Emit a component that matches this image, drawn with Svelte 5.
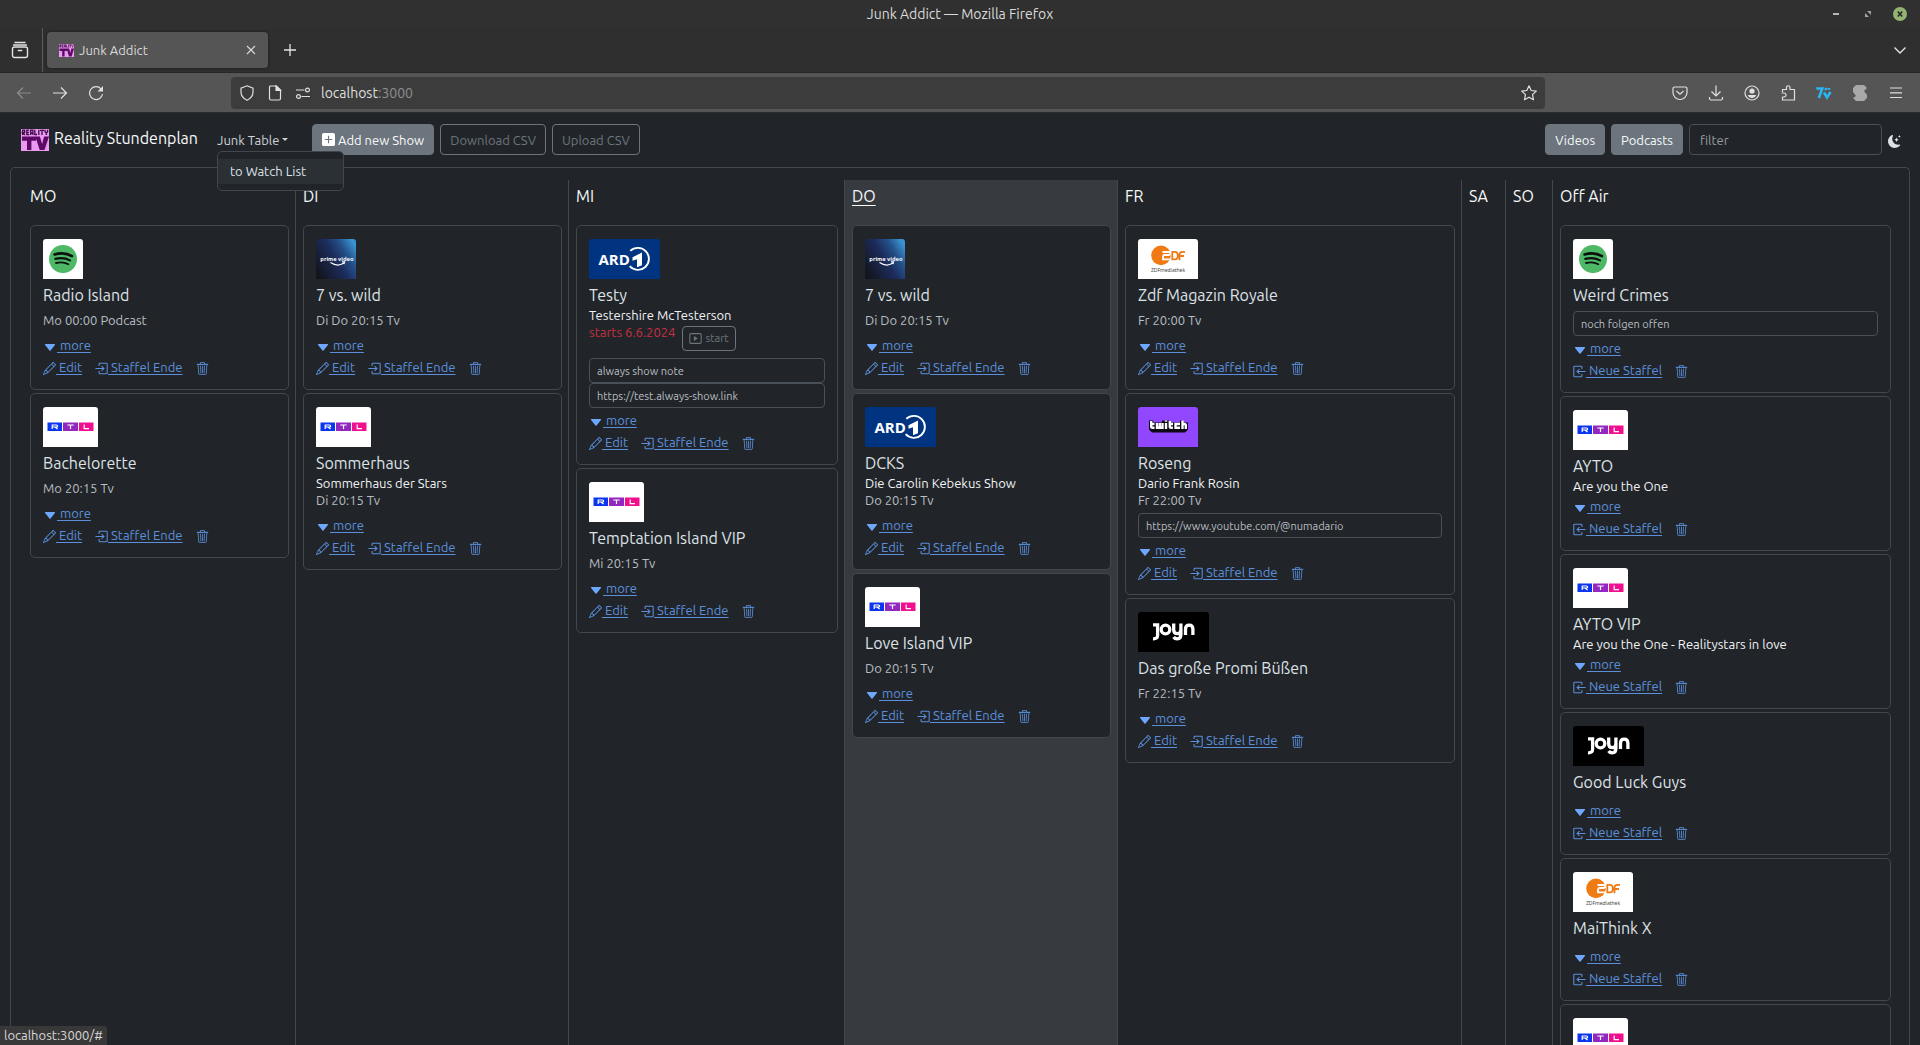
<script lang="ts">
  type Logo = 'spotify' | 'rtl' | 'prime' | 'ard' | 'zdf' | 'twitch' | 'joyn';
  type Show = {
    logo: Logo;
    title?: string;
    sub?: string;
    time?: string;
    starts?: string;
    notes?: string[];
  };
  type Day = { name: string; today?: boolean; off?: boolean; shows: Show[] };

  const days: Day[] = [
    {
      name: 'MO',
      shows: [
        { logo: 'spotify', title: 'Radio Island', time: 'Mo 00:00 Podcast' },
        { logo: 'rtl', title: 'Bachelorette', time: 'Mo 20:15 Tv' },
      ],
    },
    {
      name: 'DI',
      shows: [
        { logo: 'prime', title: '7 vs. wild', time: 'Di Do 20:15 Tv' },
        { logo: 'rtl', title: 'Sommerhaus', sub: 'Sommerhaus der Stars', time: 'Di 20:15 Tv' },
      ],
    },
    {
      name: 'MI',
      shows: [
        {
          logo: 'ard',
          title: 'Testy',
          sub: 'Testershire McTesterson',
          starts: 'starts 6.6.2024',
          notes: ['always show note', 'https://test.always-show.link'],
        },
        { logo: 'rtl', title: 'Temptation Island VIP', time: 'Mi 20:15 Tv' },
      ],
    },
    {
      name: 'DO',
      today: true,
      shows: [
        { logo: 'prime', title: '7 vs. wild', time: 'Di Do 20:15 Tv' },
        { logo: 'ard', title: 'DCKS', sub: 'Die Carolin Kebekus Show', time: 'Do 20:15 Tv' },
        { logo: 'rtl', title: 'Love Island VIP', time: 'Do 20:15 Tv' },
      ],
    },
    {
      name: 'FR',
      shows: [
        { logo: 'zdf', title: 'Zdf Magazin Royale', time: 'Fr 20:00 Tv' },
        {
          logo: 'twitch',
          title: 'Roseng',
          sub: 'Dario Frank Rosin',
          time: 'Fr 22:00 Tv',
          notes: ['https://www.youtube.com/@numadario'],
        },
        { logo: 'joyn', title: 'Das große Promi Büßen', time: 'Fr 22:15 Tv' },
      ],
    },
    { name: 'SA', shows: [] },
    { name: 'SO', shows: [] },
    {
      name: 'Off Air',
      off: true,
      shows: [
        { logo: 'spotify', title: 'Weird Crimes', notes: ['noch folgen offen'] },
        { logo: 'rtl', title: 'AYTO', sub: 'Are you the One' },
        { logo: 'rtl', title: 'AYTO VIP', sub: 'Are you the One - Realitystars in love' },
        { logo: 'joyn', title: 'Good Luck Guys' },
        { logo: 'zdf', title: 'MaiThink X' },
        { logo: 'rtl' },
      ],
    },
  ];
</script>

{#snippet realityLogo(cls: string)}
  <svg class={cls} viewBox="0 0 28 22" preserveAspectRatio="none" aria-hidden="true">
    <rect width="28" height="22" fill="#ea9af0" />
    <g fill="none" stroke="#3f0a45" stroke-width="1.3">
      <path d="M1.600 6V1.200h2v2.400h-2l2.200 2.400M8.200 1.200H5.800v4.300h2.400M5.800 3.300h2M9.700 6V1.200h2.200V6M9.700 4h2M13.800 .8v4.700h2.200M17.800 .8V6M19 1.300h4M21 1.300V6M24 .8v2l1.300 1.200 1.300-1.200v-2M25.300 4v2" />
    </g>
    <path d="M1 7.500h14v4.200h-4.600V21H6v-9.300H1zM14.300 7.500h4.600l2.200 7.600 2-7.600H28l-4.500 13.500h-4.800z" fill="#5c0a66" />
  </svg>
{/snippet}

{#snippet channelLogo(kind: Logo)}
  {#if kind === 'spotify'}
    <svg class="logo" width="40" height="40" viewBox="0 0 40 40" role="img" aria-label="Spotify">
      <rect width="40" height="40" fill="#fff" />
      <circle cx="20" cy="20" r="14" fill="#4db866" />
      <g fill="none" stroke="#0c0f0d" stroke-linecap="round">
        <path d="M11.500 15.500c6-1.700 12.600-1.200 17.500 1.700" stroke-width="2.600" />
        <path d="M12.300 19.900c5-1.400 10.400-.9 14.700 1.500" stroke-width="2.200" />
        <path d="M13 24c4.300-1 8.800-.7 12.300 1.300" stroke-width="1.800" />
      </g>
    </svg>
  {:else if kind === 'rtl'}
    <svg class="logo" width="55" height="40" viewBox="0 0 55 40" role="img" aria-label="RTL">
      <rect width="55" height="40" fill="#fff" />
      <rect x="4.500" y="15.500" width="14.500" height="8.500" fill="#0b35ee" />
      <rect x="20" y="15.500" width="15" height="8.500" fill="#9328c0" />
      <rect x="36" y="15.500" width="14.500" height="8.500" fill="#f0108f" />
      <g fill="none" stroke="#fff" stroke-width="1.200">
        <path d="M9.200 22v-4h4.400q1 0 1 1t-1 1H9.200M12 20l2.600 2" />
        <path d="M24.300 18h6.400M27.500 18v4" />
        <path d="M41.200 17.400v4.200h4.800" />
      </g>
    </svg>
  {:else if kind === 'prime'}
    <svg class="logo" width="40" height="40" viewBox="0 0 40 40" role="img" aria-label="prime video">
      <defs>
        <linearGradient id="prime-bg" x1="0" y1="0.8" x2="1" y2="0.2">
          <stop offset="0" stop-color="#13151d" />
          <stop offset="0.5" stop-color="#1c2c5c" />
          <stop offset="0.75" stop-color="#245089" />
          <stop offset="1" stop-color="#3a93d0" />
        </linearGradient>
      </defs>
      <rect width="40" height="40" fill="url(#prime-bg)" />
      <text x="21" y="21.500" text-anchor="middle" class="prime-word">prime video</text>
      <path d="M14.500 23.500q7 4.600 13 .8M26 22.800h2.600l-.7 2.400" fill="none" stroke="#fff" stroke-width="1.200" />
    </svg>
  {:else if kind === 'ard'}
    <svg class="logo" width="71" height="40" viewBox="0 0 71 40" role="img" aria-label="ARD 1">
      <rect width="71" height="40" fill="#003480" />
      <text x="9.500" y="25.800" class="ard-word">ARD</text>
      <path d="M41.300 11.900a11 11 0 1 1-.6 15.300" fill="none" stroke="#fff" stroke-width="1.900" />
      <path d="M43.500 18.300 53 13.500v12.700l-5 2v-8l-4.500 1.500z" fill="#fff" />
    </svg>
  {:else if kind === 'zdf'}
    <svg class="logo" width="60" height="40" viewBox="0 0 60 40" role="img" aria-label="ZDFmediathek">
      <rect width="60" height="40" fill="#fff" />
      <circle cx="23" cy="16.400" r="9.800" fill="#f07a13" />
      <path d="M24.500 13h6.500q1.300 0 1.300 1.500t-1.300 1.500h-4.500q-1.500 0-1.500 1.600v2.800h9" fill="none" stroke="#fff" stroke-width="1.800" />
      <path d="M34.300 12.800v7.600h2.800q2.700 0 2.700-3.800t-2.700-3.800h-3.500M41.500 21.200v-5.500q0-2.900 3-2.900H47M41.500 17H46" fill="none" stroke="#f07a13" stroke-width="1.800" />
      <text x="30" y="33" text-anchor="middle" class="zdf-word">ZDFmediathek</text>
    </svg>
  {:else if kind === 'twitch'}
    <svg class="logo" width="60" height="40" viewBox="0 0 60 40" role="img" aria-label="twitch">
      <rect width="60" height="40" fill="#9147ff" />
      <path d="M11 13.500h4l1 2h8v-2h7l2 2h9v-2h3l1 2h4v7l-3 3H14l-3-3z" fill="#0d0716" />
      <g fill="none" stroke="#fff" stroke-width="2.400">
        <path d="M13.200 14v5.500q0 1.300 1.300 1.300h2M12 17h4.500" />
        <path d="M19 16v4.800h5.500V16M21.800 16v4.800" />
        <path d="M28 16v6M28 13.500v1.300M31.800 14v5.500q0 1.300 1.300 1.300h1.800M31 17h4" />
        <path d="M42 17h-4.500v3.800H42M44.500 13.500V22M44.500 17h2q1.300 0 1.300 1.300V22" />
      </g>
    </svg>
  {:else}
    <svg class="logo" width="71" height="40" viewBox="0 0 71 40" role="img" aria-label="joyn">
      <rect width="71" height="40" fill="#000" />
      <g fill="none" stroke="#fff" stroke-width="3.300">
        <path d="M15 12.800h4.600v10.500q0 3.700-4.600 3.500" />
        <circle cx="27.500" cy="17.500" r="4.300" />
        <path d="M35.700 11.500v6.200q0 4 3.600 4t3.600-4v-6.200M42.900 17v5.500q0 4.300-3.600 4.300-2.500 0-3.700-1.800" />
        <path d="M47.500 23v-5.700q0-4.100 3.700-4.100t3.700 4.100V23" />
      </g>
    </svg>
  {/if}
{/snippet}

{#snippet trash()}
  <a class="trash" href="#delete" aria-label="Löschen">
    <svg class="ico" viewBox="0 0 16 16" aria-hidden="true">
      <path fill="currentColor" d="M6.500 1h3a.5.5 0 0 1 .5.5v1H6v-1a.5.5 0 0 1 .5-.5M11 2.500v-1A1.500 1.500 0 0 0 9.500 0h-3A1.500 1.500 0 0 0 5 1.500v1H1.500a.5.5 0 0 0 0 1h.538l.853 10.660A2 2 0 0 0 4.885 16h6.230a2 2 0 0 0 1.994-1.840l.853-10.660h.538a.5.5 0 0 0 0-1zm1.958 1-.846 10.580a1 1 0 0 1-.997.920h-6.230a1 1 0 0 1-.997-.920L3.042 3.500z" />
      <path stroke="currentColor" stroke-linecap="round" fill="none" d="M5.500 5l.5 8.500M8 5v8.500M10.500 5l-.5 8.500M1.500 2.800h13" />
    </svg>
  </a>
{/snippet}

<div class="window">
  <header class="titlebar">
    <span class="window-title">Junk Addict — Mozilla Firefox</span>
    <div class="window-controls">
      <button aria-label="Minimieren"><svg width="14" height="14" viewBox="0 0 14 14"><path d="M4 7h6" stroke="#b5b5b5" stroke-width="2" /></svg></button>
      <button aria-label="Maximieren"><svg width="14" height="14" viewBox="0 0 14 14"><path d="M6 4h4v4zM4 6v4h4z" fill="#a5a5a5" /></svg></button>
      <button aria-label="Schließen"><svg width="14" height="14" viewBox="0 0 14 14"><circle cx="7" cy="7" r="7" fill="#92b372" /><path d="M4.800 4.500l4.400 5M9.200 4.500l-4.400 5" stroke="#2b2b2b" stroke-width="1.700" /></svg></button>
    </div>
  </header>

  <div class="tabbar">
    <button class="chrome-btn" aria-label="Tabs anzeigen">
      <svg width="18" height="18" viewBox="0 0 18 18" fill="none" stroke="#e4e4e4" stroke-width="1.400" stroke-linecap="round"><path d="M4 1.500h10M2.500 4h13" /><rect x="1.500" y="6" width="15" height="10.500" rx="2" /><path d="M7.300 9.500h3.400" /></svg>
    </button>
    <span class="tab-divider"></span>
    <div class="tab">
      {@render realityLogo('favicon')}
      <span class="tab-label">Junk Addict</span>
      <button aria-label="Tab schließen"><svg width="10" height="10" viewBox="0 0 10 10"><path d="M1 1l8 8M9 1L1 9" stroke="#dadada" stroke-width="1.100" /></svg></button>
    </div>
    <button class="chrome-btn" aria-label="Neuer Tab"><svg width="14" height="14" viewBox="0 0 14 14"><path d="M7 1v12M1 7h12" stroke="#e4e4e4" stroke-width="1.300" /></svg></button>
    <button class="chrome-btn tabs-menu" aria-label="Alle Tabs"><svg width="14" height="14" viewBox="0 0 14 14"><path d="M1.500 4.500L7 10l5.500-5.500" fill="none" stroke="#e4e4e4" stroke-width="1.400" /></svg></button>
  </div>

  <div class="toolbar">
    <div class="tool-group">
      <button class="dim" aria-label="Zurück"><svg viewBox="0 0 16 16"><path d="M15 8H1.500M7 2.500L1.500 8 7 13.500" /></svg></button>
      <button aria-label="Vor"><svg viewBox="0 0 16 16"><path d="M1 8h13.500M9 2.500L14.500 8 9 13.500" /></svg></button>
      <button aria-label="Neu laden"><svg viewBox="0 0 16 16"><path d="M13 3.800A6.500 6.500 0 1 0 14.500 9" /><path d="M15 1v5.500H9.500z" fill="#e0e0e0" stroke="none" /></svg></button>
    </div>
    <div class="urlbar">
      <svg viewBox="0 0 16 16"><path d="M8 .8l6 2.300v4c0 4-2.500 6.600-6 8.200-3.500-1.600-6-4.200-6-8.200v-4z" /></svg>
      <svg viewBox="0 0 16 16"><path d="M3.500 1h6L13.500 5v8.500a1.500 1.500 0 0 1-1.500 1.500H4a1.500 1.500 0 0 1-1.500-1.500V2a1 1 0 0 1 1-1z" /><path d="M9 1v4.500h4.500z" fill="#e0e0e0" /></svg>
      <svg viewBox="0 0 16 16"><path d="M1 5h8.500M6.500 11.500H15" /><circle cx="12.500" cy="5" r="1.900" /><circle cx="3.500" cy="11.500" r="1.900" /></svg>
      <span class="url">localhost<span class="port">:3000</span></span>
      <svg class="star" viewBox="0 0 16 16"><path d="M8 .8l2.200 4.700 5.100.6-3.800 3.500 1 5.100L8 12.200l-4.500 2.500 1-5.100L.7 6.100l5.100-.6z" stroke-linejoin="round" /></svg>
    </div>
    <div class="tool-group">
      <button aria-label="Pocket"><svg viewBox="0 0 16 16"><path d="M2.500 2h11a1.500 1.500 0 0 1 1.500 1.500V7.500a7 7 0 0 1-14 0V3.500A1.500 1.500 0 0 1 2.500 2z" /><path d="M4.500 6L8 9.300 11.500 6" /></svg></button>
      <button aria-label="Downloads"><svg viewBox="0 0 16 16"><path d="M8 .5v10M3.500 6.500L8 11l4.500-4.500M1.500 12v1.500A1.500 1.500 0 0 0 3 15h10a1.500 1.500 0 0 0 1.500-1.500V12" /></svg></button>
      <button aria-label="Konto"><svg viewBox="0 0 16 16"><circle cx="8" cy="8" r="7" /><circle cx="8" cy="6" r="2.600" fill="#e0e0e0" stroke="none" /><path d="M3.800 10h8.400q-1 3-4.200 3t-4.200-3z" fill="#e0e0e0" stroke="none" /></svg></button>
      <button aria-label="Erweiterungen"><svg viewBox="0 0 16 16"><path d="M2.500 7V4.500h4V2.500a1.700 1.700 0 0 1 3.500 0v2h4.500V15h-12v-3H4a2 2 0 0 0 0-4H1.500" stroke-linejoin="round" /></svg></button>
      <button aria-label="7TV"><svg viewBox="0 0 16 16"><path d="M.3 3.500h6L2.800 13M8 7.500l3 5 3.500-5.500M9.300 3l1.200 2M13 3v1.800" class="seven" /></svg></button>
      <button aria-label="Stylus"><svg viewBox="0 0 16 16"><path d="M4 0h8l3 3-3 3 3 4v3l-3 3H4l-3-3 3-2-3-4V3z" fill="#a8a8a8" stroke="none" /></svg></button>
      <button aria-label="Menü"><svg viewBox="0 0 16 16"><path d="M2 3h12M2 7.800h12M2 12.500h12" /></svg></button>
    </div>
  </div>

  <div class="page">
    <nav class="navbar">
      <a class="brand" href="#home">
        {@render realityLogo('brand-logo')}
        <span>Reality Stundenplan</span>
      </a>
      <div class="dropdown">
        <button class="dropdown-toggle">Junk Table<span class="caret"></span></button>
        <div class="dropdown-menu"><a href="#watchlist">to Watch List</a></div>
      </div>
      <div class="actions">
        <button class="btn solid">
          <svg class="plus" viewBox="0 0 14 14" aria-hidden="true"><rect width="14" height="14" rx="2" fill="#fff" /><path d="M7 3v8M3 7h8" stroke="#6c757d" stroke-width="1.200" /></svg>Add new Show
        </button>
        <button class="btn outline">Download CSV</button>
        <button class="btn outline">Upload CSV</button>
      </div>
      <div class="filters">
        <button class="btn solid">Videos</button>
        <button class="btn solid">Podcasts</button>
        <input type="text" placeholder="filter" aria-label="filter" />
        <button class="theme" aria-label="Dark Mode">
          <svg viewBox="0 0 16 16" fill="#dee2e6"><path d="M6 .3a.77.77 0 0 1 .08.860 7.200 7.200 0 0 0-.880 3.460c0 4.020 3.280 7.280 7.320 7.280q.790-.001 1.530-.160a.79.79 0 0 1 .810.316.73.73 0 0 1-.031.893A8.350 8.350 0 0 1 8.340 16C3.730 16 0 12.290 0 7.710 0 4.270 2.110 1.310 5.120.060A.75.75 0 0 1 6 .280" /><path d="M10.500 3.200q.4 2.300 2.600 2.700-2.200.4-2.600 2.700-.4-2.300-2.600-2.700 2.200-.4 2.600-2.700zM14 0q.2 1.500 1.700 1.700Q14.200 1.900 14 3.400q-.2-1.500-1.700-1.700Q13.800 1.500 14 0z" /></svg>
        </button>
      </div>
    </nav>

    <main class="board">
      {#each days as day}
        <section class="day" class:today={day.today}>
          <h2>{day.name}</h2>
          {#each day.shows as show}
            <article class="card">
              {@render channelLogo(show.logo)}
              {#if show.title}
                <h3>{show.title}</h3>
                {#if show.sub}<p class="sub">{show.sub}</p>{/if}
                {#if show.time}<p class="time">{show.time}</p>{/if}
                {#if show.starts}
                  <div class="starts">
                    <span>{show.starts}</span>
                    <button>
                      <svg viewBox="0 0 16 16" aria-hidden="true"><rect x="1" y="2" width="14" height="12" rx="1.500" fill="none" stroke="currentColor" stroke-width="1.300" /><path d="M6 5v6l5-3z" fill="currentColor" /></svg>start
                    </button>
                  </div>
                {/if}
                {#if show.notes}
                  <div class="notes">
                    {#each show.notes as note}<input type="text" value={note} aria-label="Notiz" readonly />{/each}
                  </div>
                {/if}
                <div class="more">
                  <a href="#more"><svg viewBox="0 0 16 16" aria-hidden="true"><path d="M7.250 12.500a1 1 0 0 0 1.500 0l5.500-7A.8.8 0 0 0 13.600 4H2.400a.8.8 0 0 0-.65 1.500z" fill="#6ea8fe" /></svg><span>&nbsp;more</span></a>
                </div>
                <div class="links">
                  {#if day.off}
                    <a href="#new"><svg class="ico" viewBox="0 0 16 16" aria-hidden="true"><path d="M11 5V2.500a1 1 0 0 0-1-1H2a1 1 0 0 0-1 1v11a1 1 0 0 0 1 1h8a1 1 0 0 0 1-1V11M15.500 8H5M8 5L5 8l3 3" fill="none" stroke="currentColor" stroke-width="1.300" /></svg><span>&nbsp;Neue Staffel</span></a>
                  {:else}
                    <a href="#edit"><svg class="ico" viewBox="0 0 16 16" aria-hidden="true"><path fill="currentColor" d="M12.146.146a.5.5 0 0 1 .708 0l3 3a.5.5 0 0 1 0 .708l-10 10a.5.5 0 0 1-.168.110l-5 2a.5.5 0 0 1-.650-.650l2-5a.5.5 0 0 1 .110-.168zM11.207 2.500 13.500 4.793 14.793 3.500 12.500 1.207zm1.586 3L10.500 3.207 4 9.707V10h.5a.5.5 0 0 1 .5.5v.5h.5a.5.5 0 0 1 .5.5v.5h.293zm-9.761 5.175-.106.106-1.528 3.821 3.821-1.528.106-.106A.5.5 0 0 1 5 12.500V12h-.5a.5.5 0 0 1-.5-.5V11h-.5a.5.5 0 0 1-.468-.325" /></svg><span>&nbsp;Edit</span></a>
                    <a href="#end"><svg class="ico" viewBox="0 0 16 16" aria-hidden="true"><path d="M5 5V2.500a1 1 0 0 1 1-1h8a1 1 0 0 1 1 1v11a1 1 0 0 1-1 1H6a1 1 0 0 1-1-1V11M.5 8H11M8 5l3 3-3 3" fill="none" stroke="currentColor" stroke-width="1.300" /></svg><span>&nbsp;Staffel Ende</span></a>
                  {/if}
                  {@render trash()}
                </div>
              {/if}
            </article>
          {/each}
        </section>
      {/each}
    </main>
  </div>

  <div class="status">localhost:3000/#</div>
</div>

<style>
  :global(body) {
    margin: 0;
    background: #212529;
  }
  .window {
    position: relative;
    display: flex;
    flex-direction: column;
    height: 100vh;
    overflow: hidden;
    font-family: Ubuntu, 'Noto Sans', 'Open Sans', sans-serif;
    font-size: 13px;
    color: #dee2e6;
  }
  button {
    margin: 0;
    padding: 0;
    border: 0;
    background: none;
    font: inherit;
    color: inherit;
  }
  svg {
    display: block;
    flex: none;
  }
  h2,
  h3,
  p {
    margin: 0;
  }

  /* browser chrome */
  .titlebar {
    display: grid;
    grid-template-columns: 1fr auto 1fr;
    align-items: center;
    height: 28px;
    padding: 0 13px;
    background: #303030;
  }
  .window-title {
    grid-column: 2;
    color: #dadada;
    font-size: 14px;
    line-height: 20px;
  }
  .window-controls {
    display: flex;
    justify-content: flex-end;
    gap: 18px;
  }
  .tabbar {
    display: flex;
    align-items: center;
    height: 44px;
    padding: 0 13px 0 11px;
    background: #2f2f2f;
    border-bottom: 1px solid #272727;
  }
  .tab-divider {
    align-self: stretch;
    width: 1px;
    margin: 0 4px 0 13px;
    background: #5a5a5a;
  }
  .tab {
    display: flex;
    align-items: center;
    gap: 5px;
    box-sizing: border-box;
    width: 221px;
    height: 36px;
    margin-right: 15px;
    padding: 0 12px;
    border-radius: 4px;
    background: #555;
    box-shadow: 0 0 3px #1a1a1a;
  }
  .tab-label {
    flex: 1;
    color: #d8d8d8;
  }
  .tab :global(.favicon) {
    width: 15px;
    height: 13px;
  }
  .tabs-menu {
    margin-left: auto;
  }
  .toolbar {
    display: flex;
    align-items: center;
    height: 40px;
    padding: 0 16px;
    background: #555;
    border-bottom: 1px solid #2b2b2b;
    box-sizing: border-box;
  }
  .tool-group {
    display: flex;
    gap: 20px;
  }
  .tool-group svg,
  .urlbar svg {
    width: 16px;
    height: 16px;
    fill: none;
    stroke: #e0e0e0;
    stroke-width: 1.2;
  }
  .tool-group .seven {
    stroke: #29b6f6;
    stroke-width: 2.6;
  }
  .dim {
    opacity: 0.4;
  }
  .urlbar {
    display: flex;
    flex: 1;
    align-items: center;
    gap: 12px;
    height: 32px;
    margin: 0 127px;
    padding: 0 8px;
    border-radius: 4px;
    background: #3c3c3c;
  }
  .url {
    flex: 1;
    margin-left: -2px;
    color: #dfdfdf;
    font-size: 14px;
  }
  .port {
    color: #8f8f8f;
  }

  /* page */
  .page {
    display: flex;
    flex: 1;
    flex-direction: column;
    min-height: 0;
    padding: 0 10px;
    background: #212529;
  }
  .navbar {
    display: flex;
    align-items: center;
    height: 31px;
    padding: 11px 9px 12px 11px;
  }
  .brand {
    display: flex;
    align-items: center;
    gap: 5px;
    width: 196px;
    color: #f8f9fa;
    font-size: 16px;
    line-height: 20px;
    text-decoration: none;
    white-space: nowrap;
  }
  .brand span {
    padding-bottom: 4px;
  }
  .brand :global(.brand-logo) {
    width: 28px;
    height: 22px;
  }
  .dropdown {
    position: relative;
    width: 95px;
  }
  .dropdown-toggle {
    display: flex;
    align-items: center;
    gap: 3px;
    height: 20px;
    color: #ced2d6;
  }
  .caret {
    border: 3px solid transparent;
    border-top-color: currentColor;
    border-bottom: 0;
  }
  .dropdown-menu {
    position: absolute;
    top: 21px;
    left: 0;
    z-index: 2;
    box-sizing: border-box;
    width: 127px;
    padding: 7px 0 6px;
    border: 1px solid #42474c;
    border-radius: 5px;
    background: #212529;
  }
  .dropdown-menu a {
    display: block;
    padding: 0 12px;
    background: #2b3035;
    color: #dee2e6;
    line-height: 25px;
    text-decoration: none;
  }
  .actions,
  .filters {
    display: flex;
    align-items: center;
    gap: 6px;
  }
  .filters {
    margin-left: auto;
  }
  .btn {
    display: flex;
    align-items: center;
    gap: 3px;
    box-sizing: border-box;
    height: 31px;
    padding: 0 9px;
    border: 1px solid #6c757d;
    border-radius: 4px;
    white-space: nowrap;
  }
  .solid {
    background: #6c757d;
    color: #f8f9fa;
  }
  .outline {
    color: #6c757d;
  }
  .plus {
    width: 13px;
    height: 13px;
  }
  .filters input {
    box-sizing: border-box;
    width: 193px;
    height: 31px;
    padding: 0 10px;
    border: 1px solid #495057;
    border-radius: 4px;
    background: #212529;
    color: #dee2e6;
    font: inherit;
  }
  .filters input::placeholder {
    color: #959a9e;
  }
  .theme svg {
    width: 13px;
    height: 13px;
    margin-top: 4px;
  }

  .board {
    display: grid;
    grid-template-columns: 272fr 273fr 276fr 273fr 344fr 44fr 47fr 345fr;
    flex: 1;
    min-height: 0;
    padding: 12px 12px 0;
    border: 1px solid #43484d;
    border-bottom: 0;
    border-radius: 5px 5px 0 0;
  }
  .day {
    min-width: 0;
    padding: 0 6px 0 7px;
    border-left: 1px solid #43484d;
  }
  .day:first-child {
    border-left: 0;
  }
  .today {
    background: #373b3f;
  }
  h2 {
    height: 45px;
    color: #f8f9fa;
    font-size: 16px;
    font-weight: 400;
    line-height: 32px;
    white-space: nowrap;
  }
  .today h2 {
    text-decoration: underline;
    text-underline-offset: 3px;
  }
  .card {
    display: flex;
    flex-direction: column;
    margin-bottom: 3px;
    padding: 13px 12px;
    border: 1px solid #43484d;
    border-radius: 5px;
    background: #212529;
    line-height: 17px;
  }
  .logo {
    border-radius: 3px 3px 0 0;
  }
  .prime-word {
    fill: #fff;
    font: 600 6px Ubuntu, 'Noto Sans', sans-serif;
  }
  .ard-word {
    fill: #fff;
    font: 700 15px 'Open Sans', sans-serif;
  }
  .zdf-word {
    fill: #444;
    font: 400 5px 'Noto Sans', sans-serif;
  }
  h3 {
    margin-top: 4px;
    font-size: 16px;
    font-weight: 400;
    line-height: 24px;
  }
  .sub {
    color: #f1f3f5;
  }
  .time {
    color: #b9bdc1;
  }
  h3 + .time {
    margin-top: 5px;
  }
  .starts {
    display: flex;
    gap: 7px;
    height: 30px;
    color: #c62f41;
  }
  .starts button {
    display: flex;
    align-items: center;
    gap: 3px;
    box-sizing: border-box;
    height: 25px;
    margin-top: 2px;
    padding: 0 6px;
    border: 1px solid #6c757d;
    border-radius: 4px;
    color: #6c757d;
    font-size: 11px;
  }
  .starts svg {
    width: 13px;
    height: 13px;
  }
  .notes {
    display: flex;
    flex-direction: column;
    margin-top: 4px;
  }
  .notes input {
    box-sizing: border-box;
    width: 100%;
    height: 25px;
    padding: 0 7px;
    border: 1px solid #495057;
    border-radius: 4px;
    background: none;
    color: #b9bdc1;
    font: inherit;
    font-size: 11px;
  }
  .more {
    margin-top: 8px;
  }
  .notes + .more {
    margin-top: 4px;
  }
  .sub + .more {
    margin-top: 3px;
  }
  .more a,
  .links a {
    display: flex;
    align-items: center;
    color: #5b8fdc;
    text-decoration: none;
  }
  .more span,
  .links span {
    text-decoration: underline;
    text-underline-offset: 2px;
  }
  .more svg {
    width: 12px;
    height: 12px;
    margin: 2px 1px 0;
  }
  .links {
    display: flex;
    gap: 13px;
    margin-top: 5px;
  }
  .ico {
    width: 13px;
    height: 13px;
    margin-top: 2px;
  }
  .status {
    position: absolute;
    bottom: 0;
    left: 0;
    z-index: 3;
    padding: 0 4px;
    border-radius: 0 3px 0 0;
    background: #383838;
    color: #d8d8d8;
    line-height: 19px;
  }
</style>
